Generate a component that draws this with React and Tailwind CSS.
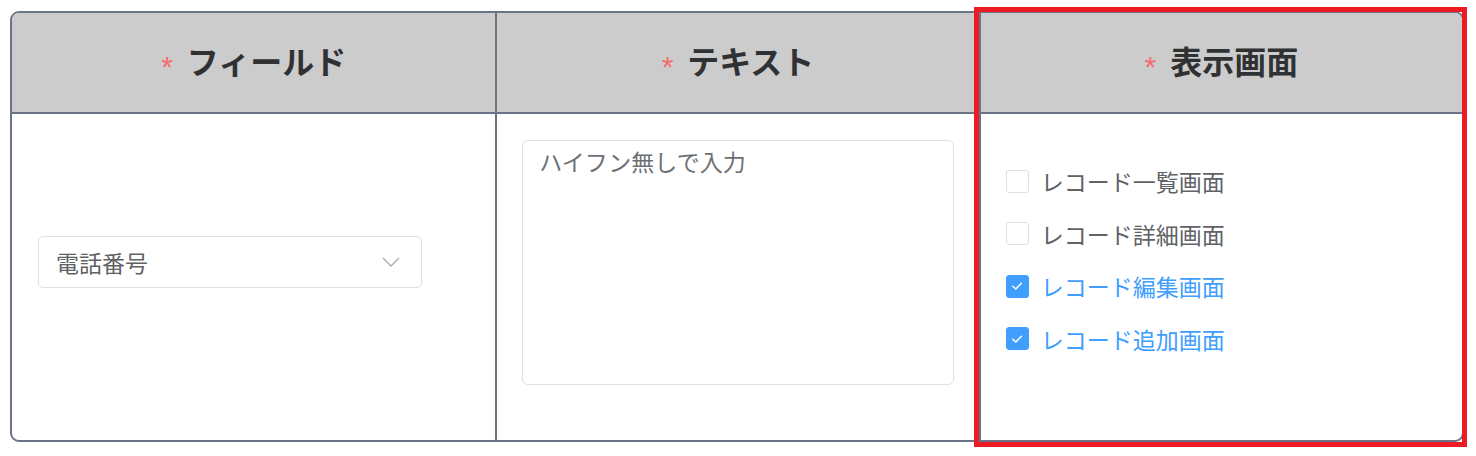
import React from 'react';

const font = { fontFamily: '"Noto Sans CJK JP", "Noto Sans", sans-serif' };

const HeaderCell = ({ label, first }) => (
  <div className={`h-[101px] bg-[#cccccc] flex items-center justify-center pb-[6px] border-b-[2.5px] border-[#6b7486] ${first ? '' : 'border-l-2'}`}>
    <span
      className="text-[#f56c6c] text-[30px] mr-[14px] leading-none translate-y-[7px]"
      style={{ fontFamily: '"Liberation Sans", Arial, sans-serif' }}
    >
      *
    </span>
    <span className="text-[32px] font-bold text-[#303133] leading-none">{label}</span>
  </div>
);

const Check = ({ label, checked }) => (
  <label className="flex items-center h-[52.5px]">
    <span
      className={`w-[23px] h-[23px] rounded-[3px] flex items-center justify-center ${
        checked ? 'bg-[#409eff] border border-[#409eff]' : 'bg-white border border-[#dcdfe6]'
      }`}
    >
      {checked && (
        <svg width="14" height="14" viewBox="0 0 14 14" fill="none">
          <path d="M2.8 7.2 L5.8 10 L11.4 4.2" stroke="white" strokeWidth="1.5" strokeLinecap="round" strokeLinejoin="round" />
        </svg>
      )}
    </span>
    <span className={`ml-[12px] text-[23px] ${checked ? 'text-[#409eff]' : 'text-[#606266]'}`}>{label}</span>
  </label>
);

export default function App() {
  return (
    <div className="relative w-[1476px] h-[456px] bg-white pt-[11px] pl-[10px]" style={font}>
      <div className="w-[1454px] border-2 border-[#6b7486] rounded-[9px] overflow-hidden">
        <div className="grid grid-cols-3">
          <HeaderCell label="フィールド" first />
          <HeaderCell label="テキスト" />
          <HeaderCell label="表示画面" />

          {/* body row */}
          <div className="h-[326px] flex items-center pl-[26px] pb-[30px]">
            <div className="w-[384px] h-[52px] border border-[#dcdfe6] rounded-[5px] flex items-center justify-between pl-[17px] pr-[21px]">
              <span className="text-[23px] text-[#606266]">電話番号</span>
              <svg width="18" height="10" viewBox="0 0 18 10" fill="none">
                <path d="M1 1 L9 9 L17 1" stroke="#a8abb2" strokeWidth="1.3" />
              </svg>
            </div>
          </div>
          <div className="h-[326px] border-l-2 border-[#6b7486] pt-[26px] pl-[25px] pr-[25px]">
            <div className="h-[245px] border border-[#dcdfe6] rounded-[6px] px-[16px] pt-[3px]">
              <span className="text-[23px] text-[#6c6f75]">ハイフン無しで入力</span>
            </div>
          </div>
          <div className="h-[326px] border-l-2 border-[#6b7486] flex flex-col justify-center pl-[25px] pb-[34px]">
            <Check label="レコード一覧画面" />
            <Check label="レコード詳細画面" />
            <Check label="レコード編集画面" checked />
            <Check label="レコード追加画面" checked />
          </div>
        </div>
      </div>

      {/* highlight */}
      <div className="absolute left-[974px] top-[7px] w-[493px] h-[440px] border-[5px] border-[#ed1c24] pointer-events-none" />
    </div>
  );
}
